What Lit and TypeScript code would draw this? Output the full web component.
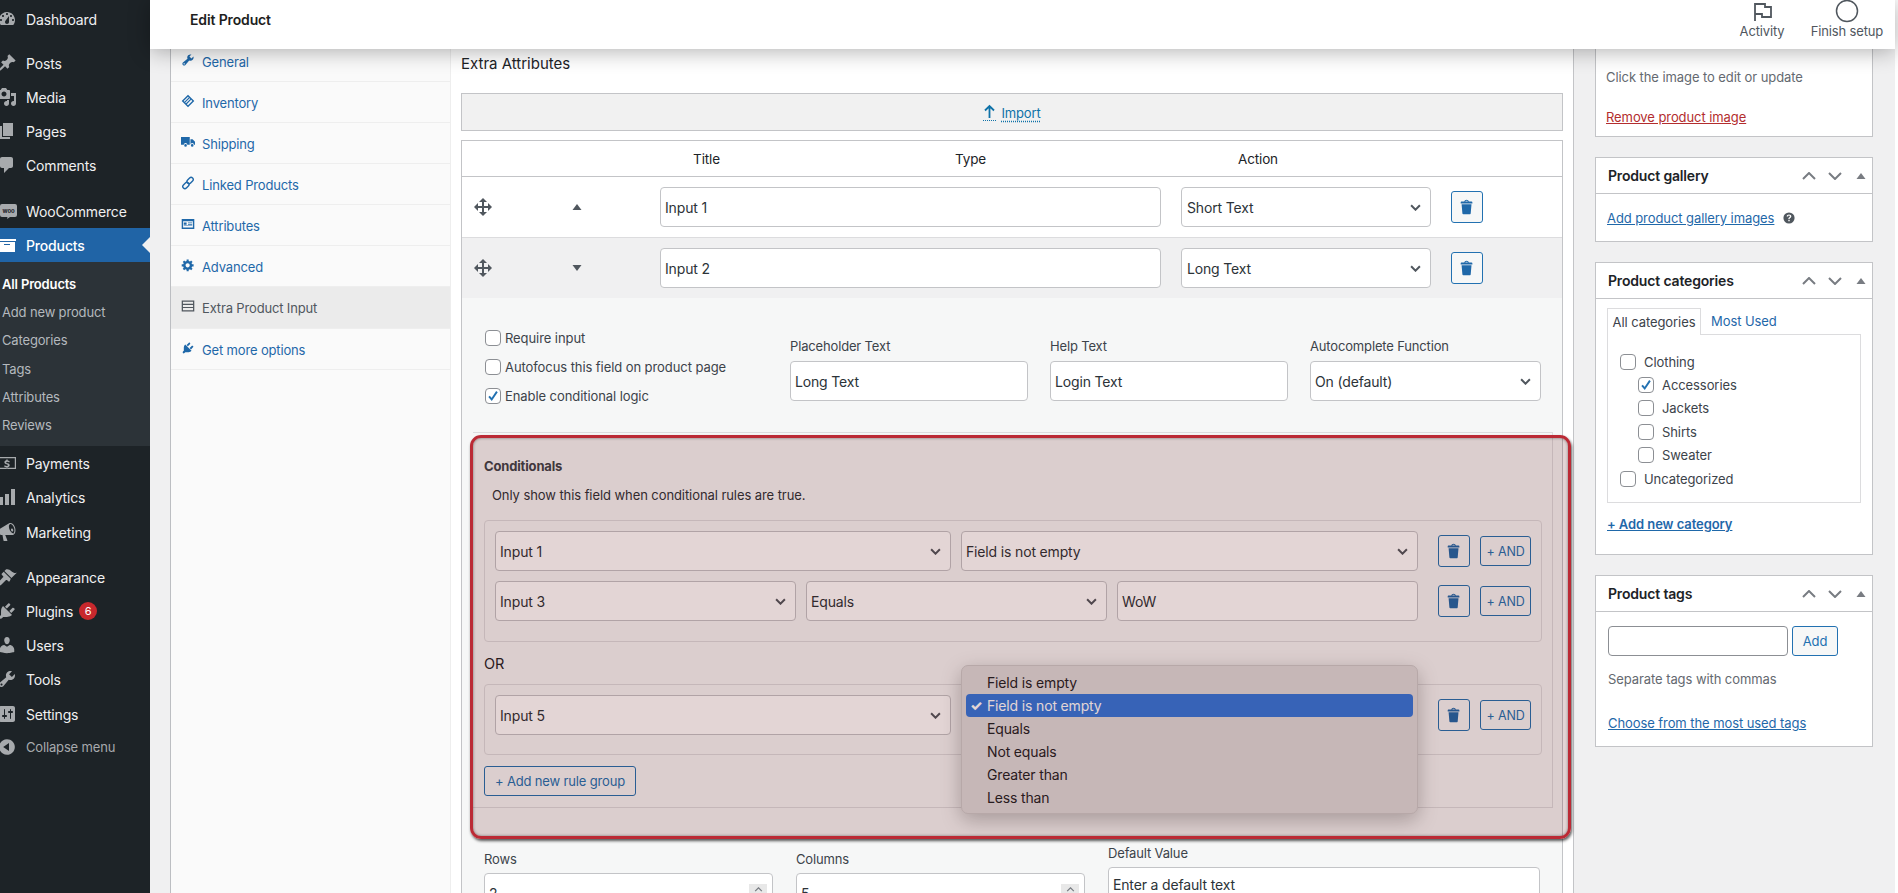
import { LitElement, html, css } from "lit";
import { customElement } from "lit/decorators.js";

const P: Record<string, string> = {
  dashboard: "M3.76 16h12.48c1.1-1.37 1.76-3.11 1.76-5 0-4.42-3.58-8-8-8s-8 3.58-8 8c0 1.89.66 3.63 1.76 5zM10 4c.55 0 1 .45 1 1s-.45 1-1 1-1-.45-1-1 .45-1 1-1zM6 6c.55 0 1 .45 1 1s-.45 1-1 1-1-.45-1-1 .45-1 1-1zm8 0c.55 0 1 .45 1 1s-.45 1-1 1-1-.45-1-1 .45-1 1-1zm-5.37 5.55L12 7v6c0 1.1-.9 2-2 2s-2-.9-2-2c0-.57.24-1.08.63-1.45zM4 10c.55 0 1 .45 1 1s-.45 1-1 1-1-.45-1-1 .45-1 1-1zm12 0c.55 0 1 .45 1 1s-.45 1-1 1-1-.45-1-1 .45-1 1-1z",
  post: "M10.44 3.02l1.82-1.82 6.36 6.35-1.83 1.82c-1.05-.68-2.48-.57-3.41.36l-.75.75c-.92.93-1.04 2.35-.35 3.41l-1.83 1.82-2.41-2.41-2.8 2.79c-.42.42-3.38 2.71-3.8 2.29s1.86-3.39 2.28-3.81l2.79-2.79L4.1 9.36l1.83-1.82c1.05.69 2.48.57 3.4-.36l.75-.75c.93-.92 1.05-2.35.36-3.41z",
  media: "M13 11V4c0-.55-.45-1-1-1h-1.67L9 1H5L3.67 3H2c-.55 0-1 .45-1 1v7c0 .55.45 1 1 1h10c.55 0 1-.45 1-1zM7 4.5c1.38 0 2.5 1.12 2.5 2.5S8.38 9.5 7 9.5 4.5 8.38 4.5 7 5.62 4.5 7 4.5zM14 6h5v10.5c0 1.38-1.12 2.5-2.5 2.5S14 17.88 14 16.5s1.12-2.5 2.5-2.5c.17 0 .34.02.5.05V9h-3V6zm-4 8.05V13h2v3.5c0 1.38-1.12 2.5-2.5 2.5S7 17.88 7 16.5 8.12 14 9.5 14c.17 0 .34.02.5.05z",
  page: "M6 15V2h10v13H6zm-1 1h8v2H3V5h2v11z",
  comment: "M5 2h9c1.1 0 2 .9 2 2v7c0 1.1-.9 2-2 2h-2l-5 5v-5H5c-1.1 0-2-.9-2-2V4c0-1.1.9-2 2-2z",
  archive: "M19 4v2H1V4h18zM2 7h16v10H2V7zm11 3V9H7v1h6z",
  money: "M1 4h18v12H1V4zm1.2 1.2v9.600h15.600V5.200H2.200zM9.300 6.500h1.400v1c.9.100 1.600.400 2 .7l-.5 1.200c-.5-.300-1.200-.600-2-.600-.7 0-1 .300-1 .600 0 .400.400.600 1.400.900 1.400.400 2.100 1 2.100 2 0 1-.700 1.700-2 1.900v1H9.300v-1c-.9-.100-1.700-.400-2.200-.700l.5-1.200c.6.300 1.300.600 2.100.600.700 0 1.200-.300 1.200-.700s-.400-.700-1.300-1c-1.400-.400-2.200-1-2.200-2 0-1 .700-1.700 1.900-1.900v-.800z",
  bars: "M18 18V2h-4v16h4zm-6 0V7H8v11h4zm-6 0v-8H2v8h4z",
  mega: "M18.150 5.940c.46 1.620.38 3.220-.02 4.480-.42 1.280-1.260 2.180-2.300 2.480-.16.06-.26.06-.4.06-.06.02-.12.02-.18.02-.06.02-.14.02-.22.02h-6.800l2.220 5.500c.02.14-.06.26-.14.34-.08.1-.24.16-.34.16H6.950c-.1 0-.26-.06-.34-.16-.08-.08-.16-.2-.14-.34l-1-5.500H4.250l-.02-.02c-.5.06-1.080-.18-1.540-.62s-.88-1.080-1.060-1.880c-.24-.8-.2-1.560-.02-2.200.18-.62.58-1.080 1.060-1.300l.02-.02 9-5.400c.1-.06.18-.1.24-.16.06-.04.14-.08.24-.12.16-.08.28-.12.5-.18 1.040-.3 2.240.1 3.220.98s1.840 2.240 2.260 3.860zm-2.580 5.980h-.02c.4-.1.74-.34 1.040-.7.58-.7.86-1.760.86-3.040-.02-.64-.1-1.300-.28-1.980-.34-1.360-1.020-2.500-1.780-3.240-.38-.38-.76-.66-1.140-.82-.38-.18-.74-.22-1.080-.12v.02c-.32.1-.6.32-.8.6-.18.3-.32.56-.4.98-.08.42-.06.92-.02 1.460.04.54.16 1.140.3 1.740.38 1.360 1.020 2.480 1.780 3.240.4.34.76.66 1.140.82.38.16.74.2 1.100.1zm.02-2.380c.58-.16.8-.94.52-1.780-.24-.84-.94-1.400-1.520-1.240-.56.16-.78.94-.52 1.780.24.84.96 1.400 1.520 1.240z",
  brush: "M14.480 11.060L7.410 3.990l1.500-1.500c.5-.56 2.300-.47 3.510.32 1.210.8 1.430 1.280 2.910 2.100 1.180.64 2.450 1.260 4.450.85zm-.71.71L6.700 4.700 4.930 6.470c-.39.39-.39 1.020 0 1.410l1.060 1.060c.39.39.39 1.030 0 1.420L1.200 15.200c-.8.8-.8 2 0 2.800s2 .8 2.800 0l4.800-4.800c.39-.39 1.030-.39 1.420 0l1.060 1.060c.39.39 1.020.39 1.410 0z",
  plug: "M13.110 4.360L9.870 7.600 8 5.730l3.240-3.240c.35-.34 1.050-.2 1.560.32.52.51.66 1.210.31 1.550zm-8 1.770l.91-1.120 9.010 9.010-1.190.84c-.71.71-2.630 1.160-3.820 1.160H6.140L4.900 17.260c-.59.59-1.540.59-2.120 0-.59-.58-.59-1.530 0-2.120l1.240-1.240v-3.880c0-1.130.4-3.190 1.090-3.890zm7.260 3.970l3.240-3.240c.34-.35 1.040-.21 1.550.31.52.51.66 1.210.31 1.550l-3.240 3.250z",
  user: "M10 9.250c-2.270 0-2.730-3.440-2.730-3.440C7 4.020 7.820 2 9.970 2c2.160 0 2.980 2.020 2.710 3.810 0 0-.41 3.440-2.680 3.440zm0 2.570L12.720 10c2.390 0 4.520 2.330 4.520 4.530v2.490s-3.650 1.130-7.240 1.130c-3.650 0-7.240-1.130-7.240-1.130v-2.490c0-2.250 1.940-4.480 4.470-4.480z",
  tool: "M16.680 9.770c-1.340 1.340-3.300 1.670-4.950.99l-5.410 6.520c-.99.99-2.590.99-3.580 0s-.99-2.590 0-3.570l6.520-5.420c-.68-1.650-.35-3.610.99-4.950 1.280-1.280 3.120-1.620 4.720-1.060l-2.890 2.890 2.820 2.820 2.860-2.870c.53 1.580.18 3.390-1.080 4.650zM3.810 16.210c.4.39 1.040.39 1.430 0 .4-.4.4-1.040 0-1.430-.39-.4-1.030-.4-1.430 0-.39.39-.39 1.030 0 1.430z",
  settings: "M18 16V4c0-1.100-.9-2-2-2H4c-1.100 0-2 .9-2 2v12c0 1.100.9 2 2 2h12c1.100 0 2-.9 2-2zM8 11h1c.55 0 1 .45 1 1s-.45 1-1 1H8v1.500c0 .28-.22.5-.5.5s-.5-.22-.5-.5V13H6c-.55 0-1-.45-1-1s.45-1 1-1h1V5.500c0-.28.22-.5.5-.5s.5.22.5.5V11zm5-2h-1c-.55 0-1-.45-1-1s.45-1 1-1h1V5.500c0-.28.22-.5.5-.5s.5.22.5.5V7h1c.55 0 1 .45 1 1s-.45 1-1 1h-1v5.500c0 .28-.22.5-.5.5s-.5-.22-.5-.5V9z",
  collapse: "M10 2.160c4.330 0 7.840 3.510 7.840 7.840s-3.510 7.840-7.840 7.840S2.160 14.330 2.160 10 5.670 2.160 10 2.160zm2 11.720V6.120L6.180 9.960z",
  trash: "M12 4h3c.6 0 1 .4 1 1v1H3V5c0-.6.5-1 1-1h3c.2-1.100 1.300-2 2.500-2s2.300.9 2.500 2zM8 4h3c-.2-.6-.9-1-1.500-1S8.200 3.400 8 4zM4 7h11l-.9 10.100c0 .5-.5.9-1 .9H5.900c-.5 0-.9-.4-1-.9L4 7z",
  move: "M19 10l-4 4v-3h-4v4h3l-4 4-4-4h3v-4H5v3l-4-4 4-4v3h4V5H6l4-4 4 4h-3v4h4V6z",
  gear: "M18 12h-2.180c-.17.7-.44 1.350-.81 1.930l1.540 1.540-2.100 2.100-1.540-1.540c-.58.36-1.230.64-1.910.81V19H8v-2.180c-.68-.17-1.330-.45-1.910-.81l-1.540 1.540-2.120-2.120 1.540-1.540c-.36-.58-.63-1.230-.79-1.890H1V9.030h2.170c.16-.7.44-1.350.8-1.940L2.430 5.550l2.100-2.100 1.540 1.540c.58-.37 1.240-.64 1.930-.81V2h3v2.180c.68.16 1.330.44 1.910.8l1.540-1.540 2.120 2.120-1.540 1.540c.36.59.64 1.240.8 1.920H18V12zm-8.500 1.500c1.660 0 3-1.340 3-3s-1.340-3-3-3-3 1.340-3 3 1.340 3 3 3z",
  truck: "M0 3h12.500v11H9a2.500 2.500 0 0 0-5 0H0V3zm13.500 3h3L20 9.500V14h-1.500a2.500 2.500 0 0 0-5 0V6zM6.500 13a1.900 1.900 0 1 1 0 3.800 1.900 1.900 0 0 1 0-3.800zm9.500 0a1.900 1.900 0 1 1 0 3.800 1.900 1.900 0 0 1 0-3.800z",
  tag: "M10 1l9 9-9 9-9-9 9-9zm0 2.800L3.800 10l1.100 1.100 6.200-6.200L10 3.800zm2.300 2.300l-6.200 6.200 1 1 6.200-6.200-1-1zm2.200 2.200l-6.200 6.200 1.700 1.700 6.200-6.200-1.700-1.700z",
  card: "M1 3h18v14H1V3zm2 3v9h14V6H3zm1 2h4v3H4V8zm6 0h6v1h-6V8zm0 2h6v1h-6v-1zm-6 2h12v1H4v-1z",
  list: "M1 2h18v16H1V2zm1.800 1.800v3h14.400v-3H2.800zm0 4.600v3h14.400v-3H2.800zm0 4.600v3.200h14.400V13H2.800z",
  help: "M10 2a8 8 0 1 1 0 16 8 8 0 0 1 0-16zm1 12.500v-2H9v2h2zM10 5c-1.900 0-3.200 1-3.300 2.800h1.900c.1-.8.600-1.200 1.400-1.200.8 0 1.300.4 1.300 1.100 0 .6-.3.9-1 1.400-.9.600-1.300 1.200-1.300 2.300v.2h1.900v-.2c0-.6.2-.9.9-1.400.9-.6 1.500-1.300 1.500-2.500C13.300 6 12 5 10 5z",
};

const chev = html`<svg class="chev" viewBox="0 0 10 6"><path d="M1 1l4 4 4-4" fill="none" stroke="#50575e" stroke-width="1.800"/></svg>`;
const ic = (n: string, c = "") => html`<svg class="${c}" viewBox="0 0 20 20"><path fill-rule="evenodd" d="${P[n]}"/></svg>`;
const sel = (t: string, c = "") => html`<div class="ctl ${c}"><span class="val">${t}</span>${chev}</div>`;
const inp = (t: string, c = "") => html`<div class="ctl ${c}"><span class="val">${t}</span></div>`;
const trash = html`<div class="trashbtn">${ic("trash")}</div>`;
const and = html`<div class="andbtn">+ AND</div>`;
const cbox = (on = false) => html`<span class="cb">${on ? html`<svg viewBox="0 0 16 16"><path d="M3.500 8.500l3 3.500 6-9" fill="none" stroke="#2271b1" stroke-width="2.200"/></svg>` : ""}</span>`;
const ctrls = html`<div class="hctl">
  <svg viewBox="0 0 14 8"><path d="M1 7l6-6 6 6" fill="none" stroke="#787c82" stroke-width="2"/></svg>
  <svg viewBox="0 0 14 8"><path d="M1 1l6 6 6-6" fill="none" stroke="#787c82" stroke-width="2"/></svg>
  <svg class="up" viewBox="0 0 10 6"><path d="M5 0l4.500 6h-9z" fill="#787c82"/></svg>
</div>`;

@customElement("app-root")
export class AppRoot extends LitElement {
  static styles = css`
    :host { display: block; width: 1898px; height: 893px; overflow: hidden; background: #fff; font-family: Inter, "Liberation Sans", sans-serif; font-size: 13px; color: #3c434a; letter-spacing: -0.012em; }
    * { box-sizing: border-box; }
    .page { display: flex; width: 1898px; height: 893px; overflow: hidden; }
    .side { width: 150px; flex: none; background: #1d2327; padding-top: 2px; overflow: hidden; color: #f0f0f1; font-size: 14px; }
    .mi { height: 34px; display: flex; align-items: center; padding-left: 26px; position: relative; }
    .mi svg { position: absolute; left: -3px; top: 7px; width: 20px; height: 20px; fill: #a7aaad; }
    .mi.gap { margin-top: 10px; }
    .mi.gap2 { margin-top: 12px; }
    .mi.gap3 { margin-top: 11px; }
    .mi.nudge { margin-top: 1px; }
    .mi.active { background: #2064a6; color: #fff; font-weight: 500; }
    .mi.active svg { fill: #fff; }
    .mi.active::after { content: ""; position: absolute; right: 0; top: 9px; border: 8px solid transparent; border-right-color: #f0f0f1; border-left-width: 0; }
    .mi.collapse { font-size: 13px; color: #a7aaad; margin-top: -1px; }
    .badge { width: 18px; height: 18px; border-radius: 50%; background: #c8282d; color: #fff; font-size: 11px; display: flex; align-items: center; justify-content: center; margin-left: 6px; }
    .sub { background: #2c3338; padding: 8px 0 7px 2px; font-size: 13px; color: #b4b9be; }
    .sub div { height: 28.200px; display: flex; align-items: center; }
    .sub .cur { color: #fff; font-weight: 600; }
    .main { width: 1745px; flex: none; display: flex; flex-direction: column; height: 893px; }
    .top { height: 49px; flex: none; background: #fff; display: flex; align-items: flex-start; position: relative; z-index: 5; box-shadow: 0 2px 22px rgba(0,0,0,.32); padding-left: 40px; }
    .top h1 { margin: 12px 0 0; font-size: 14px; line-height: 16px; font-weight: 600; color: #1e1e1e; flex: 1; letter-spacing: -0.01em; }
    .tact { display: flex; flex-direction: column; align-items: center; color: #50575e; font-size: 13px; line-height: 16px; }
    .tact svg { width: 24px; height: 24px; display: block; }
    .tact.a { width: 60px; margin-right: 15px; }
    .tact.b { width: 80px; margin-right: 8px; }
    .tact span { margin-top: -1px; }
    .work { flex: 1; display: flex; background: #f0f0f1; padding-left: 20px; min-height: 0; overflow: hidden; }
    .tabs { width: 281px; flex: none; background: #fafafa; border-left: 1px solid #bcbec2; border-right: 1px solid #eee; }
    .tab { height: 41px; border-bottom: 1px solid #eee; display: flex; align-items: center; gap: 0; padding: 2px 0 0 10px; color: #1f68a9; font-size: 13px; }
    .tab.first { height: 33px; padding: 0 0 7px 10px; }
    .tab.on { background: #ebebeb; color: #50575e; height: 42px; padding-top: 0; }
    .tab svg { width: 14px; height: 14px; fill: #1f68a9; margin: -4px 7px 0 0; flex: none; }
    .tab.on svg { fill: #50575e; }
    .content { width: 1123px; flex: none; background: #fff; border-right: 1px solid #c3c4c7; padding: 4px 10px 0 10px; }
    .content h2 { margin: 0; padding-top: 1px; font-size: 15px; line-height: 20px; font-weight: 400; color: #1d2327; height: 40px; letter-spacing: 0; }
    .import { height: 38px; background: #f1f1f1; border: 1px solid #c3c4c7; display: flex; align-items: center; justify-content: center; gap: 0; color: #0f72a8; padding-top: 1px; }
    .import span { text-decoration: underline dotted; text-underline-offset: 3px; }
    .import i { width: 13px; height: 17px; border-bottom: 1px dotted #0f72a8; margin-right: 5px; display: flex; justify-content: center; }
    .import svg { width: 11px; height: 14px; display: block; }
    .tbl { margin-top: 9px; border: 1px solid #c3c4c7; border-bottom: 0; }
    .thead { display: grid; grid-template-columns: 197px 95px 433px 142px; height: 36px; align-items: center; text-align: center; font-size: 13.500px; color: #1d2327; border-bottom: 1px solid #c3c4c7; }
    .row { height: 61px; display: flex; align-items: center; padding: 0 0 1px 11px; border-bottom: 1px solid #dcdcde; }
    .row.alt { height: 60px; background: #f0f0f1; border-bottom: 0; padding-bottom: 0; }
    .mv { width: 20px; height: 20px; fill: #50575e; flex: none; }
    .tri { width: 10px; height: 6px; margin-left: 79px; margin-right: 78px; flex: none; fill: #50575e; }
    .ctl { height: 40px; background: #fff; border: 1px solid #c3c4c7; border-radius: 4px; display: flex; align-items: center; justify-content: space-between; padding: 1px 8px 0 4px; font-size: 14px; color: #2c3338; flex: none; }
    .ctl .chev { width: 11px; height: 7px; margin-right: 1px; flex: none; }
    .w501 { width: 501px; margin-right: 20px; }
    .w250 { width: 250px; padding-left: 5px; margin-right: 20px; }
    .trashbtn { width: 32px; height: 32px; border: 1px solid #2271b1; border-radius: 3px; background: #f6f7f7; display: flex; align-items: center; justify-content: center; flex: none; }
    .trashbtn svg { width: 18px; height: 18px; fill: #1f68a9; }
    .andbtn { width: 51px; height: 30px; border: 1px solid #2271b1; border-radius: 3px; background: #f6f7f7; color: #2271b1; display: flex; align-items: center; justify-content: center; font-size: 12.500px; flex: none; }
    .detail { background: #f6f7f7; height: 700px; }
    .opts { display: flex; padding: 25px 0 0 23px; height: 103px; }
    .checks { width: 305px; flex: none; }
    .chk { height: 29px; display: flex; align-items: center; gap: 4px; color: #3c434a; letter-spacing: -0.006em; }
    .cb { width: 16px; height: 16px; border: 1px solid #8c8f94; border-radius: 4px; background: #fff; display: block; flex: none; }
    .cb svg { width: 14px; height: 14px; display: block; }
    .fld { margin-top: 15px; margin-right: 22px; flex: none; }
    .fld label { display: block; line-height: 16px; margin-bottom: 7px; color: #3c434a; }
    .fld .ctl { width: 100%; }
    .f1 { width: 238px; }
    .f3 { width: 231px; margin-right: 0; }
    .cond { position: relative; margin: 31px 0 0 11px; width: 1080px; height: 376px; border: 1px solid #dcdcde; border-left: 0; padding: 25px 0 0 11px; }
    .cond h4 { margin: 0; font-size: 13px; line-height: 16px; font-weight: 700; color: #3c434a; letter-spacing: -0.012em; }
    .cond p { margin: 13px 0 0 8px; line-height: 16px; color: #2c3338; letter-spacing: -0.006em; }
    .grp { width: 1058px; border: 1px solid #dcdcde; border-radius: 4px; padding: 10px 0 20px 10px; margin-top: 17px; display: flex; flex-direction: column; gap: 10px; }
    .rl { display: flex; align-items: center; gap: 10px; }
    .rl .trashbtn { margin-left: 10px; }
    .w456 { width: 456px; }
    .w457 { width: 457px; }
    .w301 { width: 301px; }
    .focus { border: 2px solid #2a5b99; }
    .or { font-size: 14.500px; line-height: 24px; margin-top: 10px; color: #1d2327; }
    .grp.g2 { margin-top: 8px; padding-bottom: 19px; }
    .addrule { width: 152px; height: 30px; margin-top: 11px; border: 1px solid #2271b1; border-radius: 3px; background: #f6f7f7; color: #2271b1; display: flex; align-items: center; justify-content: center; font-size: 13px; }
    .dd { position: absolute; left: 488px; top: 232px; width: 457px; height: 149px; background: #dddcdc; border: 1px solid #cbcaca; border-radius: 7px; box-shadow: 0 6px 20px rgba(0,0,0,.26); padding: 5px 4px 0; color: #1d2327; font-size: 14px; }
    .dd div { height: 23px; display: flex; align-items: center; padding-left: 21px; position: relative; border-radius: 4px; }
    .dd .sel { background: #3277dc; color: #fff; }
    .dd .sel b { position: absolute; left: 4px; font-size: 14px; font-weight: 800; }
    .hl { position: absolute; left: -3px; top: 2px; width: 1101px; height: 404px; background: rgba(85,0,0,.165); border: 3px solid #bb2a35; border-radius: 11px; box-shadow: 1px 2px 3px rgba(0,0,0,.65), inset 0 0 3px rgba(0,0,0,.45); z-index: 2; }
    .more { display: flex; padding-left: 22px; }
    .mf { flex: none; margin-right: 23px; width: 289px; margin-top: 43px; }
    .mf label { display: block; line-height: 16px; margin-bottom: 6px; color: #3c434a; }
    .mf .ctl { width: 100%; position: relative; }
    .mf.d { width: 432px; margin: 37px 0 0 0; }
    .mf.d .ctl { height: 40px; padding-bottom: 6px; align-items: center; }
    .spin { position: absolute; right: 5px; top: 10px; width: 18px; height: 18px; background: #e8e8e8; display: flex; justify-content: center; padding-top: 3px; }
    .spin svg { width: 9px; height: 5px; }
    .col { width: 278px; flex: none; margin-left: 21px; display: flex; flex-direction: column; gap: 20px; letter-spacing: -0.006em; }
    .box { background: #fff; border: 1px solid #c3c4c7; }
    .box.b0 { border-top: 0; height: 88px; padding: 20px 0 0 10px; color: #646970; }
    .box.b0 div { line-height: 16px; }
    .del { color: #b32d2e; text-decoration: underline; margin-top: 24px; }
    .bh { height: 36px; padding: 0 6px 0 12px; border-bottom: 1px solid #c3c4c7; display: flex; align-items: center; justify-content: space-between; font-size: 14px; font-weight: 600; color: #1d2327; letter-spacing: -0.012em; }
    .hctl { display: flex; align-items: center; }
    .hctl svg { width: 14px; height: 8px; margin-right: 12px; display: block; }
    .hctl .up { width: 10px; height: 6px; margin: 0 0 0 2px; }
    .lnk { color: #1f68a9; text-decoration: underline; }
    .b1 { height: 85px; }
    .b1 .bb { display: flex; align-items: center; padding: 16px 0 0 11px; line-height: 16px; }
    .b1 .qm { width: 14px; height: 14px; fill: #50575e; margin-left: 8px; }
    .b2 { height: 293px; }
    .b2 .bb { padding: 8px 0 0 11px; }
    .tabsm { display: flex; height: 27px; align-items: center; }
    .tabsm .t1 { width: 94px; height: 27px; border: 1px solid #dcdcde; border-bottom: 0; background: #fff; display: flex; align-items: center; justify-content: center; color: #3c434a; position: relative; top: 1px; z-index: 1; }
    .tabsm .t2 { margin-left: 10px; color: #1f68a9; }
    .panel { width: 254px; height: 169px; border: 1px solid #dcdcde; padding: 15px 0 0 12px; }
    .ci { height: 23.400px; display: flex; align-items: center; gap: 8px; color: #3c434a; }
    .ci.in { padding-left: 18px; }
    .addc { display: block; margin-top: 13px; font-weight: 600; color: #1f68a9; text-decoration: underline; line-height: 16px; }
    .b3 { height: 172px; }
    .b3 .bb { padding: 14px 0 0 12px; }
    .tr { display: flex; gap: 4px; }
    .tinp { width: 180px; height: 30px; border: 1px solid #8c8f94; border-radius: 4px; }
    .tadd { width: 46px; height: 30px; border: 1px solid #2271b1; border-radius: 3px; background: #f6f7f7; color: #2271b1; display: flex; align-items: center; justify-content: center; }
    .hint { color: #646970; line-height: 16px; margin-top: 15px; }
    .lk2 { margin-top: 28px; line-height: 16px; }
  `;

  render() {
    const m = (i: string, t: string, c = "") => html`<div class="mi ${c}">${ic(i)}${t}</div>`;
    const tab = (i: string, t: string, c = "") => html`<div class="tab ${c}">${ic(i)}${t}</div>`;
    return html`<div class="page">
      <nav class="side">
        ${m("dashboard", "Dashboard")}
        ${m("post", "Posts", "gap")}
        ${m("media", "Media")}
        ${m("page", "Pages")}
        ${m("comment", "Comments")}
        <div class="mi gap2"><svg viewBox="0 0 20 20"><path d="M5 3h13a2 2 0 0 1 2 2v9a2 2 0 0 1-2 2h-5l-3 2 .5-2H5a2 2 0 0 1-2-2V5a2 2 0 0 1 2-2z"/><text x="11.500" y="11.500" text-anchor="middle" font-size="6" font-weight="700" fill="#1d2327" font-family="Inter">woo</text></svg>WooCommerce</div>
        ${m("archive", "Products", "active")}
        <div class="sub">
          <div class="cur">All Products</div><div>Add new product</div><div>Categories</div><div>Tags</div><div>Attributes</div><div>Reviews</div>
        </div>
        ${m("money", "Payments")}
        ${m("bars", "Analytics")}
        ${m("mega", "Marketing", "nudge")}
        ${m("brush", "Appearance", "gap3")}
        <div class="mi">${ic("plug")}Plugins<span class="badge">6</span></div>
        ${m("user", "Users")}
        ${m("tool", "Tools")}
        ${m("settings", "Settings", "nudge")}
        ${m("collapse", "Collapse menu", "collapse")}
      </nav>
      <div class="main">
        <header class="top">
          <h1>Edit Product</h1>
          <div class="tact a"><svg viewBox="0 0 24 24"><path d="M5 21V4h10v3h6v10H12v-3H5" fill="none" stroke="#50575e" stroke-width="1.800"/></svg><span>Activity</span></div>
          <div class="tact b"><svg viewBox="0 0 24 24"><circle cx="12" cy="11" r="10.500" fill="none" stroke="#50575e" stroke-width="1.500"/></svg><span>Finish setup</span></div>
        </header>
        <div class="work">
          <div class="tabs">
            ${tab("tool", "General", "first")}
            ${tab("tag", "Inventory")}
            ${tab("truck", "Shipping")}
            <div class="tab"><svg viewBox="0 0 20 20"><g fill="none" stroke="#1f68a9" stroke-width="2"><rect x="10" y="1.500" width="6" height="10" rx="3" transform="rotate(45 13 6.500)"/><rect x="4" y="8.500" width="6" height="10" rx="3" transform="rotate(45 7 13.500)"/></g></svg>Linked Products</div>
            ${tab("card", "Attributes")}
            ${tab("gear", "Advanced")}
            ${tab("list", "Extra Product Input", "on")}
            ${tab("plug", "Get more options")}
          </div>
          <section class="content">
            <h2>Extra Attributes</h2>
            <div class="import"><i><svg viewBox="0 0 11 14"><path d="M5.500 14V2M1 6.500l4.500-4.500 4.500 4.500" fill="none" stroke="#0f72a8" stroke-width="1.800"/></svg></i><span>Import</span></div>
            <div class="tbl">
              <div class="thead"><span></span><span>Title</span><span>Type</span><span>Action</span></div>
              <div class="row">
                ${ic("move", "mv")}
                <svg class="tri" viewBox="0 0 10 6"><path d="M5 0l4.500 6h-9z"/></svg>
                ${inp("Input 1", "w501")}${sel("Short Text", "w250")}${trash}
              </div>
              <div class="row alt">
                ${ic("move", "mv")}
                <svg class="tri" viewBox="0 0 10 6"><path d="M5 6L.5 0h9z"/></svg>
                ${inp("Input 2", "w501")}${sel("Long Text", "w250")}${trash}
              </div>
              <div class="detail">
                <div class="opts">
                  <div class="checks">
                    <div class="chk">${cbox()}Require input</div>
                    <div class="chk">${cbox()}Autofocus this field on product page</div>
                    <div class="chk">${cbox(true)}Enable conditional logic</div>
                  </div>
                  <div class="fld f1"><label>Placeholder Text</label>${inp("Long Text")}</div>
                  <div class="fld f1"><label>Help Text</label>${inp("Login Text")}</div>
                  <div class="fld f3"><label>Autocomplete Function</label>${sel("On (default)")}</div>
                </div>
                <div class="cond">
                  <h4>Conditionals</h4>
                  <p>Only show this field when conditional rules are true.</p>
                  <div class="grp">
                    <div class="rl">${sel("Input 1", "w456")}${sel("Field is not empty", "w457")}${trash}${and}</div>
                    <div class="rl">${sel("Input 3", "w301")}${sel("Equals", "w301")}${inp("WoW", "w301")}${trash}${and}</div>
                  </div>
                  <div class="or">OR</div>
                  <div class="grp g2">
                    <div class="rl">${sel("Input 5", "w456")}${sel("", "w457 focus")}${trash}${and}</div>
                  </div>
                  <div class="addrule">+ Add new rule group</div>
                  <div class="dd">
                    <div>Field is empty</div>
                    <div class="sel"><b>✓</b>Field is not empty</div>
                    <div>Equals</div><div>Not equals</div><div>Greater than</div><div>Less than</div>
                  </div>
                  <div class="hl"></div>
                </div>
                <div class="more">
                  <div class="mf"><label>Rows</label><div class="ctl"><span class="val">2</span><span class="spin"><svg viewBox="0 0 10 6"><path d="M1 5l4-4 4 4" fill="none" stroke="#787c82" stroke-width="1.500"/></svg></span></div></div>
                  <div class="mf"><label>Columns</label><div class="ctl"><span class="val">5</span><span class="spin"><svg viewBox="0 0 10 6"><path d="M1 5l4-4 4 4" fill="none" stroke="#787c82" stroke-width="1.500"/></svg></span></div></div>
                  <div class="mf d"><label>Default Value</label>${inp("Enter a default text")}</div>
                </div>
              </div>
            </div>
          </section>
          <aside class="col">
            <div class="box b0"><div>Click the image to edit or update</div><div class="del">Remove product image</div></div>
            <div class="box b1">
              <div class="bh">Product gallery${ctrls}</div>
              <div class="bb"><span class="lnk">Add product gallery images</span>${ic("help", "qm")}</div>
            </div>
            <div class="box b2">
              <div class="bh">Product categories${ctrls}</div>
              <div class="bb">
                <div class="tabsm"><span class="t1">All categories</span><span class="t2">Most Used</span></div>
                <div class="panel">
                  <div class="ci">${cbox()}Clothing</div>
                  <div class="ci in">${cbox(true)}Accessories</div>
                  <div class="ci in">${cbox()}Jackets</div>
                  <div class="ci in">${cbox()}Shirts</div>
                  <div class="ci in">${cbox()}Sweater</div>
                  <div class="ci">${cbox()}Uncategorized</div>
                </div>
                <span class="addc">+ Add new category</span>
              </div>
            </div>
            <div class="box b3">
              <div class="bh">Product tags${ctrls}</div>
              <div class="bb">
                <div class="tr"><div class="tinp"></div><div class="tadd">Add</div></div>
                <div class="hint">Separate tags with commas</div>
                <div class="lnk lk2">Choose from the most used tags</div>
              </div>
            </div>
          </aside>
        </div>
      </div>
    </div>`;
  }
}
